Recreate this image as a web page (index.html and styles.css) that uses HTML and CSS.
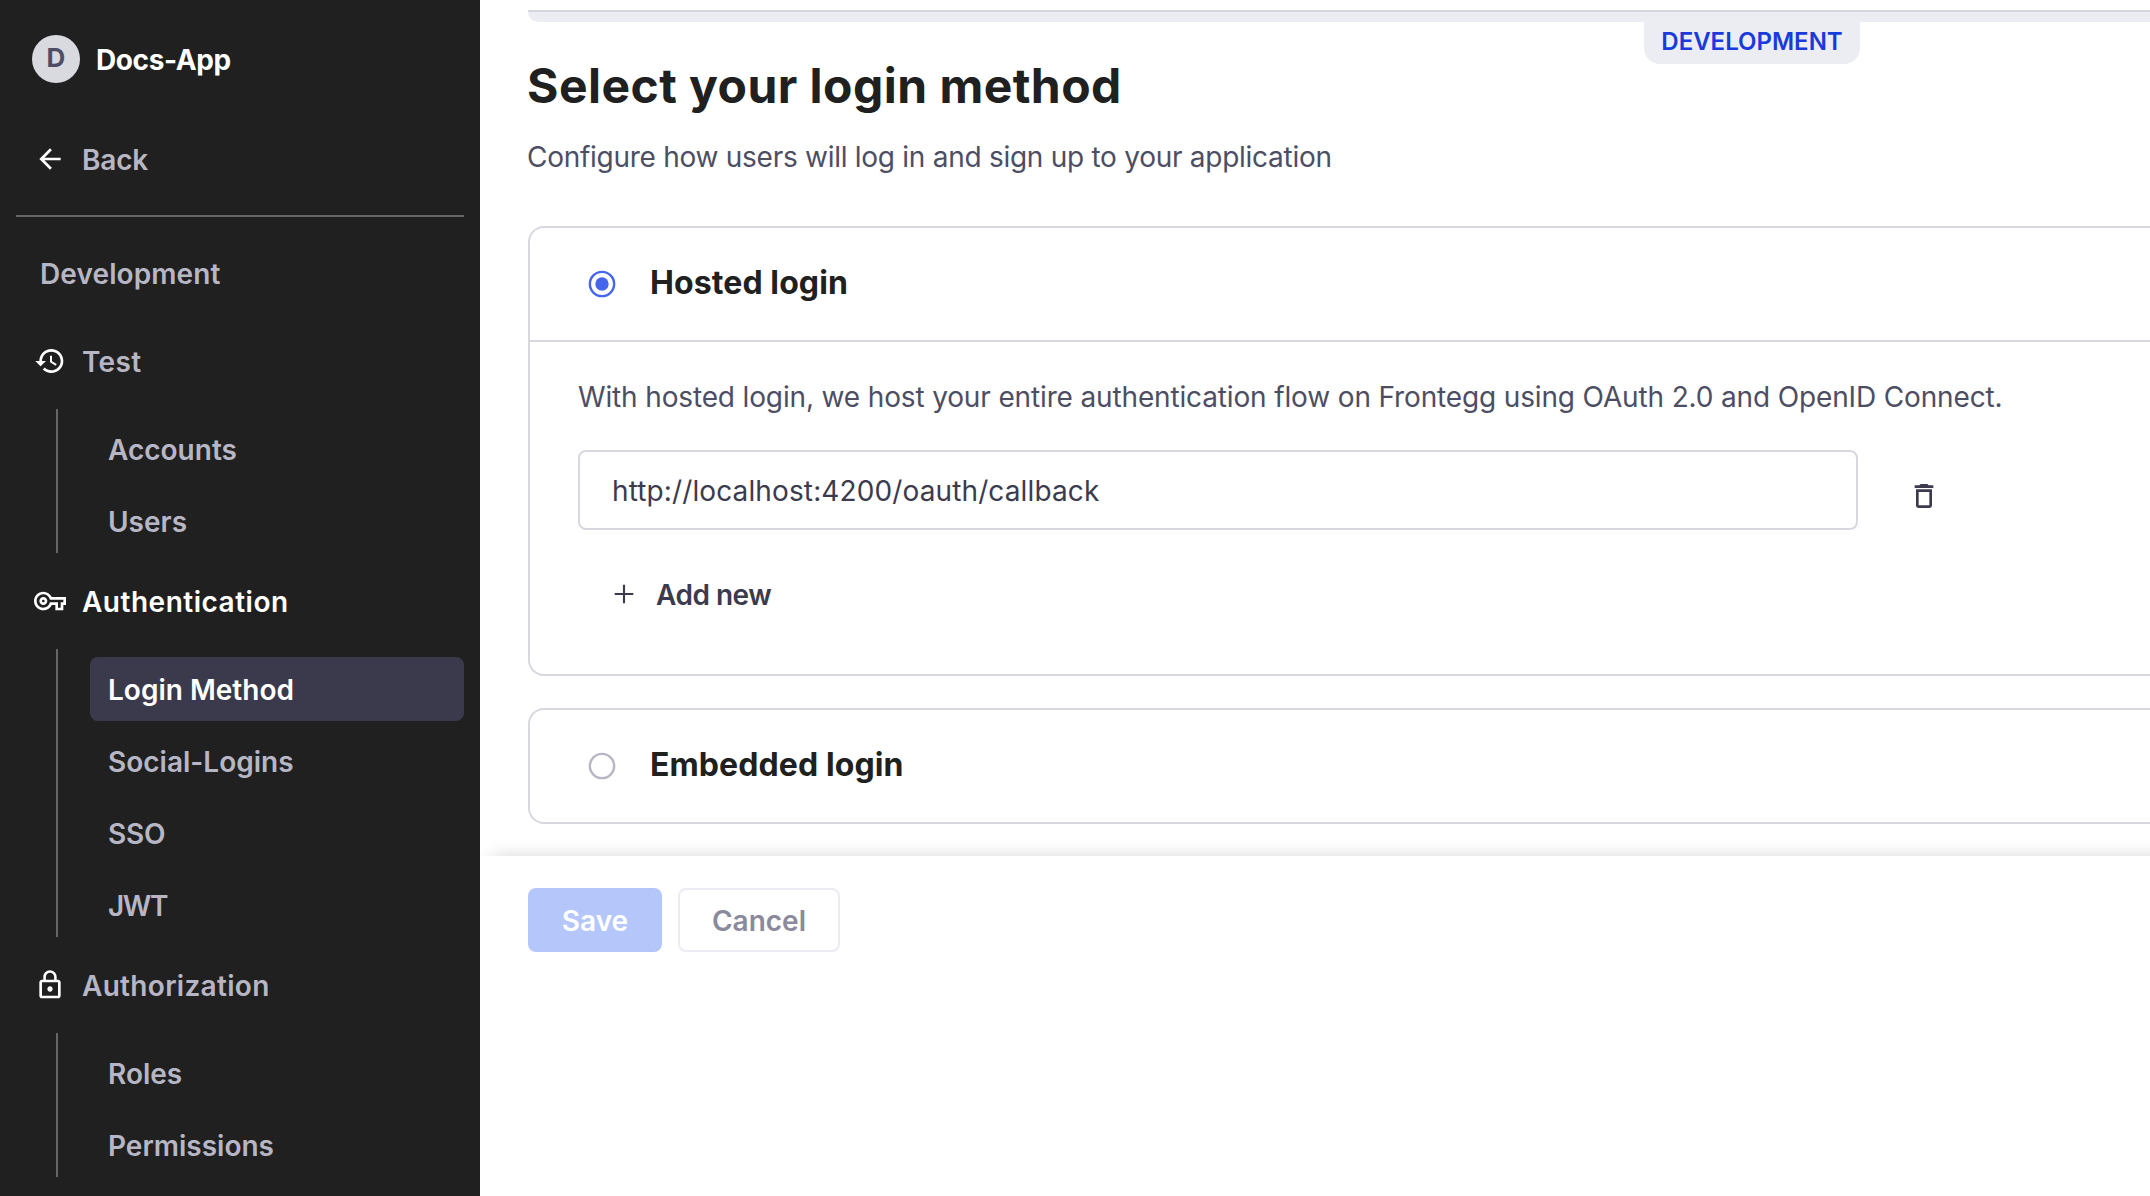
FILE: index.html
```html
<!DOCTYPE html>
<html lang="en">
<head>
<meta charset="utf-8">
<title>Login method</title>
<link rel="stylesheet" href="styles.css">
</head>
<body>
<div class="app">
  <aside class="sidebar">
    <div class="brand">
      <span class="avatar">D</span>
      <span class="brand-name">Docs-App</span>
    </div>
    <a class="back">
      <svg class="icon" viewBox="0 0 24 24"><path d="M20 11H7.830l5.590-5.590L12 4l-8 8 8 8 1.410-1.410L7.830 13H20v-2z"/></svg>
      <span>Back</span>
    </a>
    <div class="environment">Development</div>

    <div class="nav-head">
      <svg class="icon" viewBox="0 0 24 24"><path d="M13 3c-4.970 0-9 4.030-9 9H1l3.890 3.890.070.140L9 12H6c0-3.870 3.130-7 7-7s7 3.130 7 7-3.130 7-7 7c-1.930 0-3.680-.790-4.940-2.060l-1.420 1.420C8.270 19.990 10.510 21 13 21c4.970 0 9-4.030 9-9s-4.030-9-9-9zm-1 5v5l4.250 2.520.770-1.280-3.520-2.090V8H12z"/></svg>
      <span class="wide">Test</span>
    </div>
    <nav class="nav-group">
      <a class="nav-item">Accounts</a>
      <a class="nav-item">Users</a>
    </nav>

    <div class="nav-head current">
      <svg class="icon" viewBox="0 0 24 24"><path d="M22 19h-6v-4h-2.680c-1.140 2.420-3.600 4-6.320 4-3.860 0-7-3.140-7-7s3.140-7 7-7c2.720 0 5.170 1.580 6.320 4H24v6h-2v4zm-4-2h2v-4h2v-2H11.940l-.230-.670C11.010 8.340 9.110 7 7 7c-2.760 0-5 2.240-5 5s2.240 5 5 5c2.110 0 4.010-1.340 4.710-3.330l.230-.670H18v4zM7 15c-1.650 0-3-1.350-3-3s1.350-3 3-3 3 1.350 3 3-1.350 3-3 3zm0-4c-.550 0-1 .450-1 1s.450 1 1 1 1-.450 1-1-.450-1-1-1z"/></svg>
      <span class="wider">Authentication</span>
    </div>
    <nav class="nav-group">
      <a class="nav-item selected">Login Method</a>
      <a class="nav-item">Social-Logins</a>
      <a class="nav-item tight">SSO</a>
      <a class="nav-item tighter">JWT</a>
    </nav>

    <div class="nav-head">
      <svg class="icon" viewBox="0 0 24 24"><path d="M12 17c1.100 0 2-.900 2-2s-.900-2-2-2-2 .900-2 2 .900 2 2 2zm6-9h-1V6c0-2.760-2.240-5-5-5S7 3.240 7 6v2H6c-1.100 0-2 .900-2 2v10c0 1.100.900 2 2 2h12c1.100 0 2-.900 2-2V10c0-1.100-.900-2-2-2zM8.900 6c0-1.710 1.390-3.100 3.100-3.100s3.100 1.390 3.100 3.100v2H8.900V6zM18 20H6V10h12v10z"/></svg>
      <span class="wide">Authorization</span>
    </div>
    <nav class="nav-group">
      <a class="nav-item">Roles</a>
      <a class="nav-item">Permissions</a>
    </nav>
  </aside>

  <main class="main">
    <div class="content">
      <div class="env-bar"><span class="env-tag">DEVELOPMENT</span></div>
      <h1 class="title">Select your login method</h1>
      <p class="subtitle">Configure how users will log in and sign up to your application</p>

      <section class="card hosted">
        <header class="card-head">
          <svg class="radio checked" viewBox="0 0 24 24"><circle class="ring" cx="12" cy="12" r="9.1"/><circle class="dot" cx="12" cy="12" r="5"/></svg>
          <h2 class="card-title">Hosted login</h2>
        </header>
        <div class="card-body">
          <p class="description">With hosted login, we host your entire authentication flow on Frontegg using OAuth 2.0 and OpenID Connect.</p>
          <div class="url-row">
            <div class="url-field">http://localhost:4200/oauth/callback</div>
            <svg class="icon-dark" viewBox="0 0 24 24"><path d="M16 9v10H8V9h8m-1.500-6h-5l-1 1H5v2h14V4h-3.500l-1-1zM18 7H6v12c0 1.100.900 2 2 2h8c1.100 0 2-.900 2-2V7z"/></svg>
          </div>
          <div class="add-new">
            <svg class="icon-dark" viewBox="0 0 24 24"><path d="M19 12.800h-6.200V19h-1.600v-6.200H5v-1.600h6.200V5h1.600v6.200H19z"/></svg>
            <span>Add new</span>
          </div>
        </div>
      </section>

      <section class="card">
        <header class="card-head">
          <svg class="radio" viewBox="0 0 24 24"><circle class="ring" cx="12" cy="12" r="9.1"/></svg>
          <h2 class="card-title">Embedded login</h2>
        </header>
      </section>
    </div>

    <footer class="actions">
      <button class="btn save">Save</button>
      <button class="btn cancel">Cancel</button>
    </footer>
  </main>
</div>
</body>
</html>
```
FILE: styles.css
```css
* { box-sizing: border-box; }

body {
  margin: 0;
  background: #fff;
  font-family: Inter, "Noto Sans", sans-serif;
  font-size: 28px;
  line-height: 40px;
}

h1, h2, p { margin: 0; }

.app {
  display: flex;
  height: 1196px;
  overflow: hidden;
}

/* Sidebar */
.sidebar {
  width: 480px;
  flex: none;
  background: #202020;
  color: #b7b6c5;
  font-weight: 600;
}

.brand {
  display: flex;
  align-items: center;
  gap: 16px;
  height: 48px;
  margin: 35px 32px 0;
}

.avatar {
  width: 48px;
  height: 48px;
  border-radius: 50%;
  background: #d9d9e0;
  color: #4d4e66;
  font-size: 26px;
  font-weight: 700;
  line-height: 46px;
  text-align: center;
}

.brand-name {
  padding-top: 2px;
  color: #fff;
  font-weight: 700;
  letter-spacing: -0.4px;
}

.back {
  display: flex;
  align-items: flex-start;
  gap: 16px;
  height: 134px;
  margin: 0 16px;
  padding: 60px 0 0 18px;
  border-bottom: 2px solid #666;
}

.back span {
  margin-top: -3px;
  letter-spacing: -0.2px;
}

.nav-head {
  display: flex;
  align-items: center;
  gap: 16px;
  height: 96px;
  padding-left: 34px;
}

.nav-head span { padding-top: 2px; }

.icon {
  width: 32px;
  height: 32px;
  flex: none;
  fill: #fff;
}

.current { color: #fff; }
.wide { letter-spacing: 0.3px; }
.wider { letter-spacing: 0.5px; }

.environment {
  height: 96px;
  padding: 37px 0 0 40px;
  letter-spacing: 0.1px;
}

.nav-group {
  margin-left: 56px;
  padding-top: 8px;
  border-left: 2px solid #666;
}

.nav-item {
  display: block;
  height: 64px;
  margin: 0 16px 0 32px;
  padding: 13px 18px 11px;
  border-radius: 8px;
}

.nav-item + .nav-item { margin-top: 8px; }

.tight { letter-spacing: -0.2px; }
.tighter { letter-spacing: -1.4px; }

.selected {
  background: #3b3a4c;
  color: #fff;
}

/* Main area */
.main {
  flex: 1;
  min-width: 0;
  overflow: hidden;
}

.content { padding: 10px 0 32px 48px; }

.env-bar {
  position: relative;
  height: 12px;
  border-top: 2px solid #d6d7dc;
  border-bottom-left-radius: 10px;
  background: #ecedf2;
}

.env-tag {
  position: absolute;
  top: 10px;
  left: 1116px;
  width: 216px;
  height: 42px;
  border-radius: 0 0 16px 16px;
  background: #ecedf2;
  color: #1b3adb;
  font-size: 24px;
  font-weight: 600;
  line-height: 39px;
  text-align: center;
}

.title {
  margin: 32px 0 0 -1px;
  color: #202020;
  font-size: 48px;
  font-weight: 700;
  letter-spacing: 0.46px;
  line-height: 64px;
}

.subtitle {
  margin: 19px 0 49px -1px;
  color: #4d4e63;
  letter-spacing: -0.27px;
}

.card {
  border: 2px solid #d8d8df;
  border-right: 0;
  border-radius: 16px 0 0 16px;
}

.hosted {
  height: 450px;
  margin-bottom: 32px;
}

.card-head {
  display: flex;
  align-items: center;
  gap: 32px;
  height: 112px;
  padding-left: 56px;
}

.radio {
  width: 32px;
  height: 32px;
  fill: none;
}

.ring {
  stroke: #b7b6c5;
  stroke-width: 1.8;
}

.checked .ring { stroke: #4565ed; }
.dot { fill: #4565ed; }

.card-title {
  padding-bottom: 3px;
  color: #202020;
  font-size: 32px;
  font-weight: 700;
  letter-spacing: 0.1px;
}

.card-body {
  padding: 35px 0 0 48px;
  border-top: 2px solid #d8d8df;
}

.description {
  color: #4d4e63;
  letter-spacing: -0.145px;
  white-space: nowrap;
}

.url-row {
  display: flex;
  align-items: center;
  gap: 50px;
  margin-top: 33px;
}

.url-field {
  width: 1280px;
  height: 80px;
  padding: 19px 32px;
  border: 2px solid #d8d8df;
  border-radius: 8px;
  color: #3b3b4d;
  letter-spacing: 0.12px;
}

.icon-dark {
  width: 32px;
  height: 32px;
  flex: none;
  fill: #3b3b4d;
}

.url-row .icon-dark { margin-top: 12px; }

.add-new {
  display: flex;
  align-items: center;
  gap: 16px;
  margin-top: 45px;
  padding-left: 30px;
  color: #3b3b4d;
  font-weight: 600;
  letter-spacing: -0.5px;
}

.add-new .icon-dark { margin-top: -2px; }

/* Footer actions */
.actions {
  display: flex;
  gap: 16px;
  width: 1720px;
  height: 340px;
  padding: 32px 48px;
  background: #fff;
  box-shadow: 0 -10px 18px -12px rgba(0, 0, 0, 0.2);
}

.btn {
  height: 64px;
  padding: 2px 0 0;
  border: 0;
  border-radius: 8px;
  font: 600 28px/40px Inter, "Noto Sans", sans-serif;
}

.save {
  width: 134px;
  background: #b4c6fa;
  color: #fff;
}

.cancel {
  width: 162px;
  border: 2px solid #ecebf1;
  background: #fff;
  color: #8b8a9c;
}
```
